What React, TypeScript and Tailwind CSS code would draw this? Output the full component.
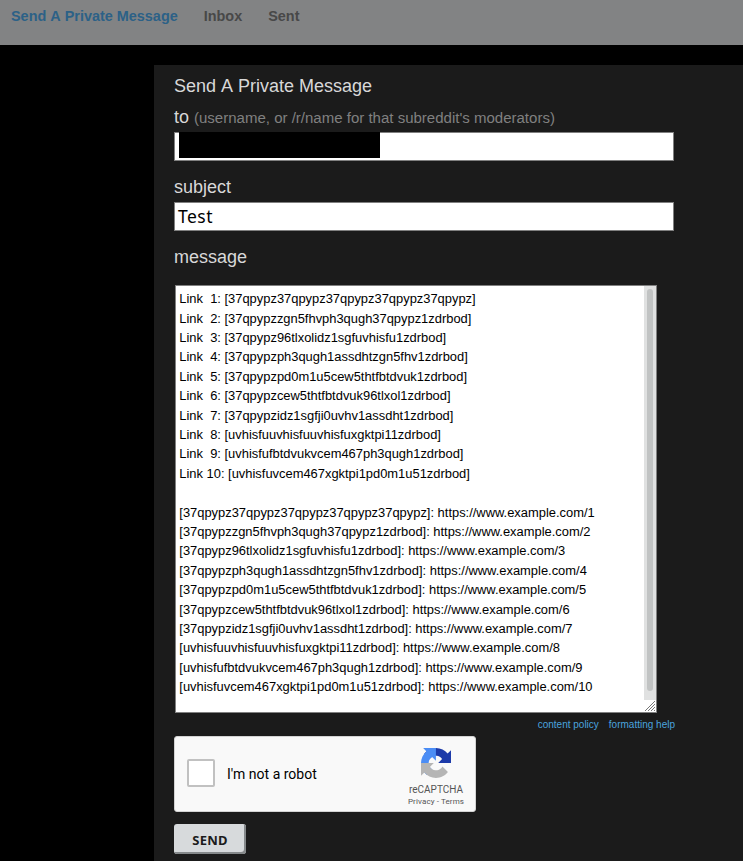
const message = `Link  1: [37qpypz37qpypz37qpypz37qpypz37qpypz]
Link  2: [37qpypzzgn5fhvph3qugh37qpypz1zdrbod]
Link  3: [37qpypz96tlxolidz1sgfuvhisfu1zdrbod]
Link  4: [37qpypzph3qugh1assdhtzgn5fhv1zdrbod]
Link  5: [37qpypzpd0m1u5cew5thtfbtdvuk1zdrbod]
Link  6: [37qpypzcew5thtfbtdvuk96tlxol1zdrbod]
Link  7: [37qpypzidz1sgfji0uvhv1assdht1zdrbod]
Link  8: [uvhisfuuvhisfuuvhisfuxgktpi11zdrbod]
Link  9: [uvhisfufbtdvukvcem467ph3qugh1zdrbod]
Link 10: [uvhisfuvcem467xgktpi1pd0m1u51zdrbod]

[37qpypz37qpypz37qpypz37qpypz37qpypz]: https://www.example.com/1
[37qpypzzgn5fhvph3qugh37qpypz1zdrbod]: https://www.example.com/2
[37qpypz96tlxolidz1sgfuvhisfu1zdrbod]: https://www.example.com/3
[37qpypzph3qugh1assdhtzgn5fhv1zdrbod]: https://www.example.com/4
[37qpypzpd0m1u5cew5thtfbtdvuk1zdrbod]: https://www.example.com/5
[37qpypzcew5thtfbtdvuk96tlxol1zdrbod]: https://www.example.com/6
[37qpypzidz1sgfji0uvhv1assdht1zdrbod]: https://www.example.com/7
[uvhisfuuvhisfuuvhisfuxgktpi11zdrbod]: https://www.example.com/8
[uvhisfufbtdvukvcem467ph3qugh1zdrbod]: https://www.example.com/9
[uvhisfuvcem467xgktpi1pd0m1u51zdrbod]: https://www.example.com/10`;

function RecaptchaLogo() {
  return (
    <svg width="30" height="30" viewBox="0 0 64 64" className="shrink-0">
      <path fill="#1c3aa9" d="M64 31.955l-.033-1.37V4.687l-7.16 7.16C50.948 4.674 42.033.093 32.05.093c-10.4 0-19.622 4.96-25.458 12.64l11.736 11.86a15.55 15.55 0 0 1 4.754-5.334c2.05-1.6 4.952-2.906 8.968-2.906.485 0 .86.057 1.135.163 4.976.393 9.288 3.14 11.828 7.124l-8.307 8.307L64 31.953" />
      <path fill="#4b8df5" d="M31.862.094l-1.37.033H4.594l7.16 7.16C4.58 13.147 0 22.06 0 32.046c0 10.4 4.96 19.622 12.64 25.458L24.5 45.768a15.55 15.55 0 0 1-5.334-4.754c-1.6-2.05-2.906-4.952-2.906-8.968 0-.485.057-.86.163-1.135.393-4.976 3.14-9.288 7.124-11.828l8.307 8.307L31.86.095" />
      <path fill="#b5b5b5" d="M.001 32.045l.033 1.37v25.898l7.16-7.16c5.86 7.173 14.774 11.754 24.76 11.754 10.4 0 19.622-4.96 25.458-12.64l-11.736-11.86a15.55 15.55 0 0 1-4.754 5.334c-2.05 1.6-4.952 2.906-8.968 2.906-.485 0-.86-.057-1.135-.163-4.976-.393-9.288-3.14-11.828-7.124l8.307-8.307c-10.522.04-22.4.066-27.295-.005" />
    </svg>
  );
}

function Recaptcha() {
  return (
    <div className="mt-1 flex h-[76px] w-[302px] rounded-[3px] border border-[#d3d3d3] bg-[#f9f9f9] font-[Roboto,sans-serif]">
      <div className="ml-3 mt-[22px] size-7 shrink-0 rounded-[2px] border-2 border-[#c1c1c1] bg-white" />
      <div className="ml-3 mt-[27px] w-[168px] shrink-0 text-[14px] leading-5 text-black">I'm not a robot</div>
      <div className="flex w-[82px] shrink-0 flex-col items-center pt-[11px] text-[#555]">
        <RecaptchaLogo />
        <div className="mt-[6px] text-[10px] leading-3">reCAPTCHA</div>
        <div className="whitespace-nowrap text-[8px] leading-[11px] tracking-[0.12px]">
          <span>Privacy</span> - <span>Terms</span>
        </div>
      </div>
    </div>
  );
}

export default function App() {
  return (
    <div className="h-[861px] w-[743px] overflow-hidden bg-black font-['Liberation_Sans',Arial,sans-serif]">
      <header className="flex h-[45px] gap-[26px] bg-[#828384] pl-[11px] pt-[6px] text-[14.43px] font-bold leading-5 text-[#484848] [font-kerning:none]">
        <a className="text-[#2c6187]">Send A Private Message</a>
        <a>Inbox</a>
        <a>Sent</a>
      </header>
      <main className="ml-[154px] mt-5 h-[796px] bg-[#1b1b1b] pl-5 text-[18px] leading-6 text-[#d8d8d8]">
        <h1 className="pt-[9px] [font-kerning:none]">Send A Private Message</h1>
        <label className="mt-[7px] block [font-kerning:none]">
          to <span className="text-[15.03px] text-[#808080]">(username, or /r/name for that subreddit's moderators)</span>
        </label>
        <div className="mt-[2px] h-[29px] w-[500px] border border-[#808080] bg-white pl-1">
          <div className="-mt-px h-[26px] w-[201px] bg-black" />
        </div>
        <label className="mt-[14px] block">subject</label>
        <div className="mt-[3px] h-[29px] w-[500px] border border-[#808080] bg-white pl-[3px] font-['Noto_Sans',sans-serif] text-[17.5px] leading-[27px] tracking-[0.5px] text-black">Test</div>
        <label className="mt-[14px] block">message</label>
        <div className="ml-px mt-4 flex h-[428px] w-[482px] border border-[#808080] bg-white">
          <pre className="w-[468px] pl-[3.3px] pt-[3.1px] font-['Liberation_Sans',Arial,sans-serif] text-[12.92px] leading-[19.4px] text-black">{message}</pre>
          <div className="w-3">
            <div className="h-[414px] bg-[#e0e1e1] px-[3px] py-[3px]">
              <div className="h-[402px] w-[6px] rounded-[3px] bg-[#c1c3c3]" />
            </div>
            <svg width="12" height="12" viewBox="0 0 12 12" stroke="#777" fill="none">
              <path d="M1 11L11 1M4 11L11 4M7 11L11 7M10 11L11 10" />
            </svg>
          </div>
        </div>
        <div className="mt-[5px] flex h-[14px] w-[501px] justify-end gap-[10px] text-[10px] leading-[14px] text-[#4aa3df]">
          <a>content policy</a>
          <a>formatting help</a>
        </div>
        <Recaptcha />
        <button className="mt-3 block h-[30px] w-[72px] rounded-[3px] bg-[#d7dadc] pt-[3px] font-['Noto_Sans',sans-serif] text-[13px] font-bold leading-[27px] tracking-[0.2px] text-[#1b1b1b] shadow-[inset_-2px_-2px_0_#85898b]">SEND</button>
      </main>
    </div>
  );
}
